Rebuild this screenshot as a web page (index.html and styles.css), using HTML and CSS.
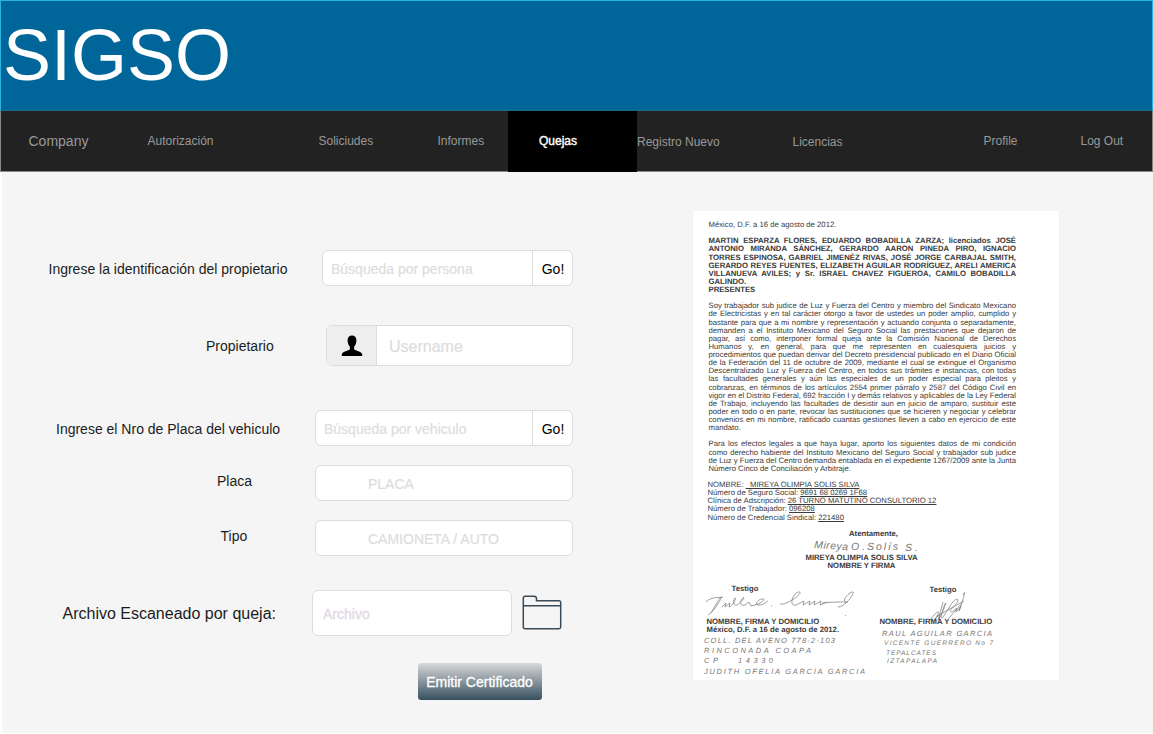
FILE: index.html
```html
<!DOCTYPE html>
<html lang="es">
<head>
<meta charset="utf-8">
<title>SIGSO</title>
<link rel="stylesheet" href="styles.css">
</head>
<body>
<header class="banner">SIGSO</header>
<nav class="nav">
  <a class="brand">Company</a>
  <a class="n-auto">Autorización</a>
  <a class="n-sol">Soliciudes</a>
  <a class="n-inf">Informes</a>
  <a class="active">Quejas</a>
  <a class="n-reg low">Registro Nuevo</a>
  <a class="n-lic low">Licencias</a>
  <a class="n-pro">Profile</a>
  <a>Log Out</a>
</nav>
<main class="content">
  <form class="form">
    <div class="row r-person">
      <label class="l-person">Ingrese la identificación del propietario</label>
      <div class="field"><span class="ph">Búsqueda por persona</span><span class="go">Go!</span></div>
    </div>
    <div class="row r-owner">
      <label class="l-owner">Propietario</label>
      <div class="field">
        <span class="addon"><svg width="22" height="22" viewBox="0 0 22 22"><path d="M11 .5C8.300 .5 6.600 2.300 6.600 5.200C6.600 8 7.500 10.300 8.900 11.800V14.300C8.500 15.200 2.300 16.600 1.200 18.300C.8 19 .7 20 .7 21H21.300C21.300 20 21.200 19 20.800 18.300C19.700 16.600 13.500 15.200 13.100 14.300V11.800C14.500 10.300 15.400 8 15.400 5.200C15.400 2.300 13.700 .5 11 .5Z"/></svg></span>
        <span class="ph">Username</span>
      </div>
    </div>
    <div class="row r-vehicle">
      <label class="l-vehicle">Ingrese el Nro de Placa del vehiculo</label>
      <div class="field"><span class="ph">Búsqueda por vehiculo</span><span class="go">Go!</span></div>
    </div>
    <div class="row r-plate">
      <label class="l-plate">Placa</label>
      <div class="field"><span class="ph">PLACA</span></div>
    </div>
    <div class="row r-type">
      <label class="l-type">Tipo</label>
      <div class="field"><span class="ph">CAMIONETA / AUTO</span></div>
    </div>
    <div class="row r-file">
      <label class="l-file">Archivo Escaneado por queja:</label>
      <div class="field"><span class="ph">Archivo</span></div>
      <svg class="folder" width="40" height="36" viewBox="0 0 40 36" fill="none" stroke="#3a4a57" stroke-width="1.500"><path d="M1.300 32V3Q1.300 1.300 3 1.300H12Q14.300 1.300 14.500 3.500V5.700H37Q38.700 5.700 38.700 7.500V32Q38.700 33.700 37 33.700H3Q1.300 33.700 1.300 32ZM1.300 10.700H38.700"/></svg>
    </div>
    <button class="submit" type="button">Emitir Certificado</button>
  </form>

  <article class="paper">
    <p>México, D.F. a 16 de agosto de 2012.</p>
    <div class="block bold">
      <p class="j">MARTIN ESPARZA FLORES, EDUARDO BOBADILLA ZARZA; licenciados JOSÉ</p>
      <p class="j">ANTONIO MIRANDA SÁNCHEZ, GERARDO AARON PINEDA PIRO, IGNACIO</p>
      <p class="j">TORRES ESPINOSA, GABRIEL JIMENÉZ RIVAS, JOSÉ JORGE CARBAJAL SMITH,</p>
      <p class="j">GERARDO REYES FUENTES, ELIZABETH AGUILAR RODRÍGUEZ, ARELI AMERICA</p>
      <p class="j">VILLANUEVA AVILES; y Sr. ISRAEL CHAVEZ FIGUEROA, CAMILO BOBADILLA</p>
      <p>GALINDO.</p>
      <p>PRESENTES</p>
    </div>
    <div class="block">
      <p class="j">Soy trabajador sub judice de Luz y Fuerza del Centro y miembro del Sindicato Mexicano</p>
      <p class="j">de Electricistas y en tal carácter otorgo a favor de ustedes un poder amplio, cumplido y</p>
      <p class="j">bastante para que a mi nombre y representación y actuando conjunta o separadamente,</p>
      <p class="j">demanden a el Instituto Mexicano del Seguro Social las prestaciones que dejaron de</p>
      <p class="j">pagar, así como, interponer formal queja ante la Comisión Nacional de Derechos</p>
      <p class="j">Humanos y, en general, para que me representen en cualesquiera juicios y</p>
      <p class="j">procedimientos que puedan derivar del Decreto presidencial publicado en el Diario Oficial</p>
      <p class="j">de la Federación del 11 de octubre de 2009, mediante el cual se extingue el Organismo</p>
      <p class="j">Descentralizado Luz y Fuerza del Centro, en todos sus trámites e instancias, con todas</p>
      <p class="j">las facultades generales y aún las especiales de un poder especial para pleitos y</p>
      <p class="j">cobranzas, en términos de los artículos 2554 primer párrafo y 2587 del Código Civil en</p>
      <p class="j">vigor en el Distrito Federal, 692 fracción I y demás relativos y aplicables de la Ley Federal</p>
      <p class="j">de Trabajo, incluyendo las facultades de desistir aun en juicio de amparo, sustituir este</p>
      <p class="j">poder en todo o en parte, revocar las sustituciones que se hicieren y negociar y celebrar</p>
      <p class="j">convenios en mi nombre, ratificado cuantas gestiones lleven a cabo en ejercicio de este</p>
      <p>mandato.</p>
    </div>
    <div class="block">
      <p class="j">Para los efectos legales a que haya lugar, aporto los siguientes datos de mi condición</p>
      <p class="j">como derecho habiente del Instituto Mexicano del Seguro Social y trabajador sub judice</p>
      <p class="j">de Luz y Fuerza del Centro demanda entablada en el expediente 1267/2009 ante la Junta</p>
      <p>Número Cinco de Conciliación y Arbitraje.</p>
    </div>
    <div class="block data">
      <p>NOMBRE: <u>&nbsp; MIREYA OLIMPIA SOLIS SILVA</u></p>
      <p>Número de Seguro Social: <u>9691 68 0269 1F68</u></p>
      <p>Clínica de Adscripción: <u>26 TURNO MATUTINO CONSULTORIO 12</u></p>
      <p>Número de Trabajador: <u>096208</u></p>
      <p>Número de Credencial Sindical: <u>221480</u></p>
    </div>
    <div class="closing bold">
      <p class="att">Atentamente,</p>
      <svg class="hand sign" width="116" height="20" viewBox="0 0 116 20">
        <text class="big" transform="translate(4 10) rotate(4)" textLength="34">Mireya</text>
        <text class="big" x="41" y="12" textLength="14">O.</text>
        <text class="big" x="57" y="12" textLength="31">Solís</text>
        <text class="big" x="95" y="13" textLength="13">S.</text>
      </svg>
      <p>MIREYA OLIMPIA SOLIS SILVA</p>
      <p>NOMBRE Y FIRMA</p>
    </div>
    <div class="witnesses">
      <section class="w-left">
        <p class="w-title">Testigo</p>
        <svg class="hand" width="160" height="23" viewBox="0 0 160 23"><path d="M2 20C8 17 17 1 15 2S7 15 5 18M0 7C6 1 14 3 17 2M16 12L20 8L19 12L24 8L23 12C27 11 31 2 29 3S27 12 31 10C36 7 40 1 37 3S33 12 39 10L43 7L45 11C56 9 61 3 56 4S48 10 53 10S61 6 62 6M65 11L66 11M74 9C80 11 99-3 93-3S82 12 90 10L98 6L97 10L104 6L103 10L109 6L108 10L115 6L114 10L121 7M116 8C126 7 133 7 140 7M132 12C140 12 151-5 146-3S134 8 142 7M139 20L140 21"/></svg>
        <p>NOMBRE, FIRMA Y DOMICILIO</p>
        <p>México, D.F. a 16 de agosto de 2012.</p>
        <svg class="hand notes" width="170" height="44" viewBox="0 0 170 44">
          <text x="0" y="9" textLength="131">COLL. DEL AVENO 778-2-103</text>
          <text x="0" y="19" textLength="107">RINCONADA COAPA</text>
          <text x="0" y="29" textLength="69">CP &#160; 14330</text>
          <text x="0" y="40" textLength="161">JUDITH OFELIA GARCIA GARCIA</text>
        </svg>
      </section>
      <section class="w-right">
        <p class="w-title">Testigo</p>
        <svg class="hand" width="120" height="31" viewBox="0 0 120 31"><path d="M50 26C55 19 60 15 58 20S51 29 54 26L60 20L59 25C65 14 67 6 65 10S59 28 63 23L69 14C75 2 81 4 76 10S68 17 72 18L77 14L76 18L81 12L79 17C83 6 87-7 83 1M57 22L84 7M69 24L82 9M58 26L63 8"/></svg>
        <p>NOMBRE, FIRMA Y DOMICILIO</p>
        <svg class="hand notes" width="120" height="44" viewBox="0 0 120 44">
          <text x="2" y="10" textLength="110">RAUL AGUILAR GARCIA</text>
          <text class="small" x="4" y="19" textLength="109">VICENTE GUERRERO No 7</text>
          <text class="small" x="6" y="29" textLength="50">TEPALCATES</text>
          <text class="small" x="7" y="37" textLength="50">IZTAPALAPA</text>
        </svg>
      </section>
    </div>
  </article>
</main>
</body>
</html>
```

FILE: styles.css
```css
* { box-sizing: border-box; }
body {
  margin: 0;
  width: 1153px;
  height: 734px;
  overflow: hidden;
  background: #fff;
  font-family: "Liberation Sans", Arial, sans-serif;
  color: #1c1c1c;
}
.banner {
  height: 111px;
  padding: 13px 0 0 2px;
  background: #006699;
  border: 1px solid #29b2e2;
  border-bottom-color: #1d6a88;
  color: #fff;
  font-size: 72px;
  line-height: 82px;
}
.nav {
  display: flex;
  height: 61px;
  padding-left: 27.500px;
  background: #222;
  border: 1px solid #8b8686;
  border-top: 0;
  color: #999;
  font-size: 12px;
  line-height: 61px;
}
.nav a { flex: none; height: 60px; }
.nav .low { padding-top: 1px; }
.nav .brand { width: 119px; font-size: 14px; }
.n-auto { width: 171px; }
.n-sol { width: 119px; }
.n-inf { width: 70.500px; }
.nav .active {
  width: 129px;
  height: 61px;
  padding: 0 0 0 31px;
  background: #000;
  color: #fff;
  -webkit-text-stroke: .4px #fff;
}
.n-reg { width: 155.500px; }
.n-lic { width: 191px; }
.n-pro { width: 97px; }

.content {
  display: flex;
  height: 561px;
  margin-left: 2px;
  background: #f5f5f5;
}
.form { width: 691px; padding-top: 78px; font-size: 14px; }
.row { display: flex; align-items: center; height: 36px; }
.row label { flex: none; white-space: nowrap; }
.field {
  display: flex;
  align-items: center;
  height: 100%;
  overflow: hidden;
  background: #fff;
  border: 1px solid #ddd;
  border-radius: 6px;
}
.ph {
  flex: 1;
  padding-left: 8px;
  color: #ddd;
  -webkit-text-stroke: .2px #ddd;
}
.go {
  width: 40px;
  height: 100%;
  padding-left: 1px;
  border-left: 1px solid #ddd;
  color: #000;
  line-height: 36px;
  text-align: center;
}
.l-person { width: 273px; padding: 1px 0 0 46.500px; }
.r-person .field { width: 251px; margin-left: 47px; }
.r-person .ph { padding-top: 1px; }
.r-owner { height: 41px; margin-top: 39px; }
.l-owner { width: 324px; padding-left: 204px; }
.r-owner .field { width: 247px; }
.addon {
  display: flex;
  align-items: center;
  justify-content: center;
  width: 50px;
  height: 100%;
  background: #eee;
  border-right: 1px solid #ddd;
}
.r-owner .ph { padding-left: 12px; padding-top: 2px; font-size: 16px; }
.r-vehicle { margin-top: 44px; }
.l-vehicle { width: 313px; padding: 2px 0 0 54px; }
.r-vehicle .ph { padding-top: 2px; }
.r-vehicle .field, .r-plate .field, .r-type .field { width: 258px; }
.r-plate, .r-type { margin-top: 19px; }
.r-plate .ph, .r-type .ph { padding: 1px 0 0 52px; }
.l-plate { width: 313px; padding: 0 0 4px 215px; }
.l-type { width: 313px; padding: 0 0 4px 218.500px; }
.r-file { height: 46px; margin-top: 34px; }
.l-file { width: 310px; padding: 2px 0 0 60.500px; font-size: 16px; }
.r-file .field { width: 200px; }
.r-file .ph { padding: 2px 0 0 10px; color: #e3d9e8; -webkit-text-stroke: .4px #e3d9e8; }
.folder { margin: 0 0 1px 10px; }
.submit {
  display: block;
  width: 124px;
  height: 37px;
  margin: 27px 0 0 416px;
  padding: 0 1px 0 0;
  border: 0;
  border-radius: 3px;
  background: linear-gradient(#d9d9d9, #36505f);
  color: #fff;
  font: 14px "Liberation Sans", Arial, sans-serif;
  -webkit-text-stroke: .3px #fff;
}

.paper {
  width: 366px;
  height: 469px;
  margin-top: 39px;
  padding: 10px 0 0 15.500px;
  background: #fff;
  color: #3a3a3a;
  font-size: 7.720px;
  line-height: 8.130px;
  white-space: nowrap;
  text-rendering: geometricPrecision;
}
.paper p { width: 307.500px; height: 8.130px; margin: 0; }
.paper .j { text-align: justify; text-align-last: justify; word-spacing: -1.200px; }
.block { margin-top: 8.130px; }
.bold { font-weight: bold; }
.data { margin-left: -1px; }
.closing { margin: 8.130px 0 0 -1px; text-align: center; }
.closing p { width: 308px; }
.closing .att { width: 332px; }
.hand {
  display: block;
  overflow: visible;
  fill: none;
  stroke: #777;
  stroke-width: .7;
}
.hand text {
  fill: #777;
  stroke: none;
  font-family: "Liberation Sans", Arial, sans-serif;
  font-size: 7.500px;
  font-style: italic;
  font-weight: normal;
}
.hand .small { font-size: 6.500px; }
.hand .big { font-size: 10.500px; }
.sign { margin: 0 0 -4.200px 102px; }
.witnesses { display: flex; margin: 15px 0 0 -5px; font-weight: bold; }
.w-left { width: 176px; }
.w-left p { width: auto; padding-left: 3px; }
.w-left .w-title { padding-left: 28px; }
.w-left .hand { margin: 2px 0 0 2px; }
.w-left .notes { margin: 0; }
.w-right { padding-top: 1px; }
.w-right p { width: auto; }
.w-right .w-title { padding-left: 50px; }
.w-right .hand { margin: 0 0 -7px; }
.w-right .notes { margin: 0; }
```
